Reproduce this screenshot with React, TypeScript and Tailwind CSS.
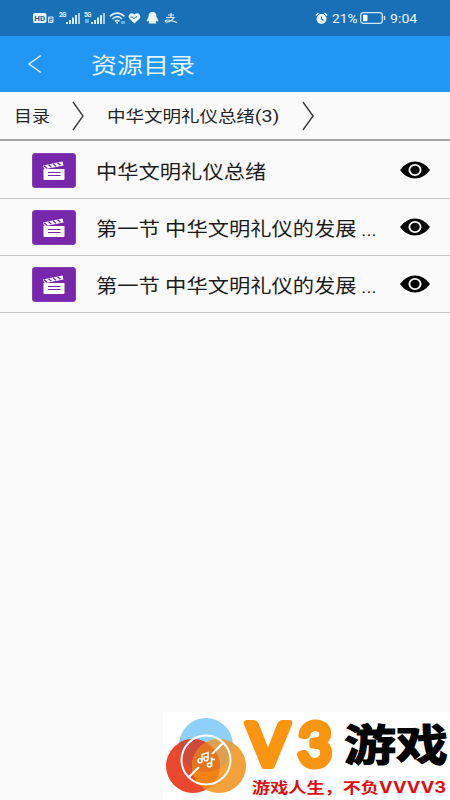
import React from "react";

const CJK = "font-[Roboto,'Noto_Sans_CJK_SC',sans-serif]";

function Signal({ label, dot }: { label: string; dot?: boolean }) {
  return (
    <svg width="22" height="14" viewBox="0 0 22 14" className="shrink-0">
      <text x="0" y="6" fontSize="6.5" fontWeight="700" fill="#e3f4ff" fontFamily="Roboto, sans-serif" textLength="7.5">
        {label}
      </text>
      {dot && <rect x="1" y="8" width="4" height="4" fill="#58b4f0" />}
      <g fill="#d5ebfa">
        <rect x="7" y="11" width="2" height="2" />
        <rect x="10" y="9" width="2" height="4" />
        <rect x="13" y="6.5" width="2" height="6.5" />
        <rect x="16" y="4" width="2" height="9" />
        <rect x="19" y="2" width="2" height="11" opacity=".75" />
      </g>
    </svg>
  );
}

function StatusBar() {
  return (
    <div className="flex h-9 items-center bg-[#1a70b7] pl-[33px] pr-[33px] text-[#e8f5fd]">
      <svg width="21" height="12" viewBox="0 0 21 12" className="shrink-0">
        <rect x="0" y="1" width="13.5" height="10" rx="2" fill="#e8f5fd" />
        <text x="1.2" y="9" fontSize="8" fontWeight="700" fill="#1a5f9c" fontFamily="Roboto, sans-serif" textLength="11">HD</text>
        <rect x="15" y="4.5" width="5.5" height="6.5" rx="1" fill="#c5e2f5" />
        <path d="M16.500 6h2.500v1.500h-2.500v1.700H19" stroke="#1a70b7" strokeWidth=".8" fill="none" />
      </svg>
      <div className="ml-[5px] flex gap-[3px]">
        <Signal label="2G" />
        <Signal label="5G" dot />
      </div>
      <svg width="17" height="14" viewBox="0 0 17 14" fill="none" stroke="#dceefa" strokeWidth="1.600" className="ml-[3px] shrink-0">
        <path d="M1 5.500C5 1 11 1 15.500 5.500M3.500 8C6.500 5 10 5 13 8M6 10.300C7.500 9 9 9 10.500 10.300" />
        <circle cx="8.200" cy="11.800" r="1" fill="#fff" stroke="none" />
        <path d="M12 11.500h4" stroke="#6fbdf4" strokeWidth="2.500" />
      </svg>
      <svg width="13" height="12" viewBox="0 0 13 12" className="ml-[2px] shrink-0">
        <path d="M6.500 11.500L1.300 6.500C-1 3.500 3 -1 6.500 2.500C10 -1 14 3.500 11.700 6.500Z" fill="#eef8fd" />
        <path d="M2.500 5h2l1.500 1.800 2-2.300 1 .8" stroke="#1a70b7" strokeWidth="1" fill="none" />
      </svg>
      <svg width="13" height="12" viewBox="0 0 13 12" className="ml-[5px] shrink-0">
        <path d="M6.500 0C3.500 0 2.500 2 2.500 5L.6 8.500q.3 1.500 1.900.5l.8 1.300-.8 1.200h8l-.8-1.200.8-1.300q1.600 1 1.900-.5L10.500 5C10.500 2 9.500 0 6.500 0Z" fill="#e7f7fb" />
      </svg>
      <svg width="14" height="12" viewBox="0 0 14 12" fill="none" stroke="#dceefa" strokeWidth="1.200" className="ml-[5px] shrink-0">
        <path d="M4 3h6M7 1v4.500M2 5.500h8Q7.500 9.500 3 10.200Q.5 10 1.500 8.500Q4 6.800 13 10.500" />
      </svg>
      <div className="ml-auto flex items-center font-[Roboto,sans-serif] text-[13px] leading-none">
        <svg width="13" height="13" viewBox="0 0 13 13" className="mr-[4px] shrink-0">
          <path d="M.8 3.500L3.500 1M12.200 3.500L9.500 1" stroke="#e8f5fd" strokeWidth="1.500" />
          <circle cx="6.500" cy="7" r="5" fill="#eef8fd" />
          <path d="M6.500 4.500V7l2 1.500" stroke="#1a70b7" fill="none" strokeWidth="1.200" />
        </svg>
        <span className="inline-block w-[26px] origin-left scale-x-[1.06] whitespace-nowrap">21%</span>
        <svg width="26" height="12" viewBox="0 0 26 12" className="ml-[2px] mr-[4px] shrink-0">
          <rect x=".7" y=".7" width="21.600" height="10.600" rx="2.500" fill="none" stroke="#cfe8f8" strokeWidth="1.300" />
          <rect x="3" y="2.700" width="4.500" height="6.600" rx="1" fill="#f2fbff" />
          <path d="M24.500 4v4" stroke="#cfe8f8" strokeWidth="1.500" />
        </svg>
        <span className="inline-block w-[27px] origin-left scale-x-[1.09] whitespace-nowrap">9:04</span>
      </div>
    </div>
  );
}

function Separator() {
  return (
    <svg width="12" height="30" viewBox="0 0 12 30" fill="none" stroke="#333" strokeWidth="1.300" className="shrink-0">
      <path d="M1 1L11 15L1 29" />
    </svg>
  );
}

function Clapper() {
  return (
    <div className="flex h-[35px] w-11 shrink-0 items-center justify-center rounded-[3px] border border-[#8a3cb8] bg-[#7627ab]">
      <svg width="22" height="20" viewBox="0 0 22 20" className="mt-px">
        <path d="M0 4.500L19.500 .5L20.500 4.500L2.500 8L1 7.500Z" fill="#fff" />
        <path d="M1 4.800l3 2.500M5.500 3.800l3 2.500M10 2.800l3 2.500M14.500 1.800l3 2.500" stroke="#7627ab" strokeWidth="1.300" />
        <path d="M1 8H21.500V18Q21.500 19 20.500 19H1.500Q.5 19 .5 18V8Z" fill="#fff" />
        <path d="M5 11.500h12.500M5 14.500h12.500" stroke="#7627ab" strokeWidth="1" />
      </svg>
    </div>
  );
}

function Eye() {
  return (
    <svg width="30" height="18" viewBox="0 0 30 18" className="ml-auto shrink-0">
      <path d="M0 9Q6 .5 15 .5T30 9Q24 17.500 15 17.500T0 9Z" fill="#050505" />
      <ellipse cx="15" cy="9" rx="5.600" ry="5.100" fill="none" stroke="#fafafa" strokeWidth="1.900" />
      <ellipse cx="15" cy="9" rx="2.800" ry="2.600" fill="#050505" />
    </svg>
  );
}

function Row({ title }: { title: string }) {
  return (
    <div className="flex h-[57px] items-center border-b border-[#c4c4c4] pl-8 pr-5">
      <Clapper />
      <span className="ml-[20px] mt-[5px] inline-block w-[252px] origin-left scale-x-[1.12] whitespace-nowrap text-[19px] leading-7 text-[#1c1c1c]">
        {title.replace(" ...", "")}
        {title.endsWith("...") && <span className="text-[17px]"> ...</span>}
      </span>
      <Eye />
    </div>
  );
}

function Watermark() {
  return (
    <svg width="287" height="88" viewBox="163 712 287 88" className="ml-auto mt-auto block shrink-0 bg-white">
      <clipPath id="blue"><circle cx="206" cy="745" r="27" /></clipPath>
      <clipPath id="red"><circle cx="193" cy="766" r="27" /></clipPath>
      <circle cx="206" cy="745" r="27" fill="#8fd0fa" />
      <circle cx="193" cy="766" r="27" fill="#e9482f" />
      <circle cx="219" cy="766" r="27" fill="#f5a13b" />
      <g clipPath="url(#blue)">
        <circle cx="193" cy="766" r="27" fill="#d04a3c" />
        <circle cx="219" cy="766" r="27" fill="#dca055" />
      </g>
      <g clipPath="url(#red)">
        <circle cx="219" cy="766" r="27" fill="#f48213" />
        <g clipPath="url(#blue)"><circle cx="219" cy="766" r="27" fill="#e57420" /></g>
      </g>
      <g fill="none" stroke="#fff" strokeWidth="2">
        <circle cx="206" cy="760" r="24.500" />
        <path d="M189 777L199 767M212 754L223 743" />
        <g strokeWidth="1.600">
          <path d="M202 760.500V754.500L208 752.500V758.500" />
          <circle cx="200" cy="760.800" r="2" />
          <circle cx="206" cy="758.800" r="2" />
          <path d="M211.500 765V757.500Q212 760 215 759.300" />
          <circle cx="209.500" cy="765" r="2" />
        </g>
      </g>
      <g fill="#f99510" stroke="#f99510" strokeLinejoin="round" fontFamily="Lato, sans-serif" fontSize="60">
        <text x="247" y="765.500" fontWeight="700" strokeWidth="6" textLength="42" lengthAdjust="spacingAndGlyphs">V</text>
        <text x="298" y="765.500" fontWeight="400" strokeWidth="7" textLength="34" lengthAdjust="spacingAndGlyphs">3</text>
      </g>
      <text x="344" y="761" fontFamily="'Noto Sans CJK SC', sans-serif" fontWeight="700" fontSize="43" textLength="104" lengthAdjust="spacingAndGlyphs" fill="#000" stroke="#000" strokeWidth="1.200">
        游戏
      </text>
      <g fill="#e00d12" fontWeight="700">
        <text x="252" y="793" fontFamily="'Noto Sans CJK SC', sans-serif" fontSize="15" textLength="127" lengthAdjust="spacingAndGlyphs">
          游戏人生，不负
        </text>
        <text x="379" y="793" fontFamily="Inter, sans-serif" fontWeight="700" fontSize="16" textLength="67" lengthAdjust="spacingAndGlyphs">VVVV3</text>
      </g>
    </svg>
  );
}

export default function App() {
  return (
    <div className={`flex h-[800px] w-[450px] flex-col overflow-hidden bg-[#fafafa] ${CJK}`}>
      <StatusBar />
      <header className="flex h-14 items-center bg-[#2196f3] pl-[28px] text-[#e6f5ff]">
        <svg width="14" height="18" viewBox="0 0 14 18" fill="none" stroke="#d9f0ff" strokeWidth="1.400" className="shrink-0">
          <path d="M13 .5L1 9L13 17.500" />
        </svg>
        <h1 className="ml-[49px] mt-[4px] origin-left scale-x-[1.18] whitespace-nowrap text-[22px] leading-8">资源目录</h1>
      </header>
      <nav className="flex h-[49px] items-center border-b-2 border-[#a3a3a3] pl-[14px] text-base text-[#252525]">
        <span className="mt-[2px] inline-block w-[58px] origin-left scale-x-[1.12] whitespace-nowrap">目录</span>
        <Separator />
        <span className="ml-[23px] mt-[2px] inline-block w-[195px] origin-left scale-x-[1.155] whitespace-nowrap">
          中华文明礼仪总绪<span className="text-[17px]">(3)</span>
        </span>
        <Separator />
      </nav>
      <main className="pt-px">
        <Row title="中华文明礼仪总绪" />
        <Row title="第一节 中华文明礼仪的发展 ..." />
        <Row title="第一节 中华文明礼仪的发展 ..." />
      </main>
      <Watermark />
    </div>
  );
}
